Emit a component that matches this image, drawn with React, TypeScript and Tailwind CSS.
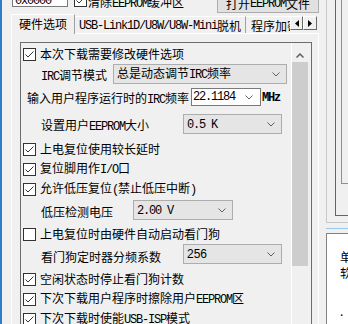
import React from "react";

const cjk = "font-['Noto_Sans_CJK_SC','Noto_Sans',sans-serif]";
const mono = "font-['Liberation_Mono',monospace] tracking-[-1.2px]";

// latin runs in the old dialog font are half-width, so set them in a narrow mono
function T({ s }: { s: string }) {
  const parts = s.split(/([\x20-\x7e]+)/);
  return (
    <>
      {parts.map((p, i) =>
        /^[\x20-\x7e]+$/.test(p) ? (
          <span key={i} className={mono}>
            {p}
          </span>
        ) : (
          p
        )
      )}
    </>
  );
}

function Check({ on }: { on: boolean }) {
  return (
    <span className="flex h-[13px] w-[13px] shrink-0 items-center justify-center border border-[#333333] bg-white">
      {on && (
        <svg width="11" height="11" viewBox="0 0 11 11">
          <path d="M1.5 5.5 L4 8 L9.5 2.5" fill="none" stroke="#333333" strokeWidth="1" />
        </svg>
      )}
    </span>
  );
}

function Chevron() {
  return (
    <svg width="8" height="5" viewBox="0 0 8 5" className="shrink-0">
      <path d="M0.5 0.5 L4 4 L7.5 0.5" fill="none" stroke="#606060" strokeWidth="1" />
    </svg>
  );
}

function Select({ value, className }: { value: string; className: string }) {
  return (
    <div
      className={`flex h-[20px] shrink-0 items-center justify-between border border-[#adadad] bg-[#e5e5e5] pl-[3px] pr-[6px] ${className}`}
    >
      <span className="whitespace-nowrap leading-none">
        <T s={value} />
      </span>
      <Chevron />
    </div>
  );
}

function CheckRow({ on, text, className = "" }: { on: boolean; text: string; className?: string }) {
  return (
    <div className={`flex h-[20px] items-center pl-[2px] ${className}`}>
      <Check on={on} />
      <span className="ml-[4px] whitespace-nowrap leading-none">
        <T s={text} />
      </span>
    </div>
  );
}

export default function App() {
  return (
    <div className={`flex h-[324px] w-[348px] overflow-hidden bg-[#f0f0f0] text-[12px] text-black ${cjk}`}>
      <div className="w-[2px] shrink-0 bg-[#2f7ccb]" />

      <div className="flex w-[318px] shrink-0 flex-col">
        {/* top row, mostly scrolled off */}
        <div className="mt-[-9px] flex h-[22px] shrink-0 items-start">
          <div className="ml-[10px] mt-[-4px] flex h-[20px] w-[56px] items-end border border-[#7a7a7a] bg-white pl-[2px]">
            <span className={`${mono} mb-[-2px] leading-[14px]`}>0x0000</span>
          </div>
          <div className="ml-[6px] mt-[3px]">
            <Check on />
          </div>
          <span className="ml-[1px] mt-[3px] whitespace-nowrap leading-[16px]">
            <T s="清除EEPROM缓冲区" />
          </span>
          <div className="ml-auto mr-[1px] flex h-[22px] w-[102px] items-center justify-center border border-[#adadad] bg-[#e1e1e1] pt-[3px]">
            <T s="打开EEPROM文件" />
          </div>
        </div>

        {/* tabs */}
        <div className="mt-[1px] flex h-[19px] shrink-0 items-end pl-[9px] pr-[3px]">
          <div className="relative z-10 mb-[-1px] flex h-[20px] w-[64px] shrink-0 items-center justify-center border-l border-t border-r border-l-white border-t-white border-r-[#a0a0a0] bg-[#f0f0f0] pb-[1px]">
            硬件选项
          </div>
          <div className="flex h-[17px] w-[171px] shrink-0 items-center justify-center overflow-hidden whitespace-nowrap border-r border-t border-r-[#a0a0a0] border-t-white pt-[2px]">
            <T s="USB-Link1D/U8W/U8W-Mini脱机" />
          </div>
          <div className="flex h-[17px] min-w-0 flex-1 items-center overflow-hidden whitespace-nowrap border-t border-t-white pl-[5px] pt-[2px] pr-[2px]">
            程序加密后传输
          </div>
          <div className="mb-[3px] flex h-[14px] shrink-0">
            <div className="flex w-[13px] items-center justify-center border border-l-white border-t-white border-r-[#696969] border-b-[#696969] bg-[#f0f0f0]">
              <svg width="4" height="7" viewBox="0 0 4 7">
                <path d="M4 0 L0 3.5 L4 7 Z" fill="#000" />
              </svg>
            </div>
            <div className="flex w-[14px] items-center justify-center border border-l-white border-t-white border-r-[#696969] border-b-[#696969] bg-[#f0f0f0]">
              <svg width="4" height="7" viewBox="0 0 4 7">
                <path d="M0 0 L4 3.5 L0 7 Z" fill="#000" />
              </svg>
            </div>
          </div>
        </div>

        {/* tab panel */}
        <div className="ml-[9px] flex w-[308px] flex-1 border-l border-r border-t border-white pl-[8px] pt-[8px]">
          <div className="flex h-[400px] w-[292px] shrink-0 border border-[#6d6d6d]">
            <div className="flex w-[270px] shrink-0 flex-col overflow-hidden pt-[1px]">
              <CheckRow on text="本次下载需要修改硬件选项" />

              <div className="flex h-[20px] items-center pl-[20px]">
                <span className="mt-[3px] w-[72px] shrink-0 whitespace-nowrap leading-none">
                  <T s="IRC调节模式" />
                </span>
                <Select value="总是动态调节IRC频率" className="w-[174px]" />
              </div>

              <div className="mt-[3px] flex h-[20px] items-center pl-[6px]">
                <span className="mt-[3px] w-[164px] shrink-0 whitespace-nowrap leading-none">
                  <T s="输入用户程序运行时的IRC频率" />
                </span>
                <div className="flex h-[18px] w-[70px] shrink-0 items-center justify-between border border-[#7a7a7a] bg-white pl-[1px] pr-[7px]">
                  <span className={`${mono} leading-none`}>22.1184</span>
                  <Chevron />
                </div>
                <span className={`${mono} ml-[1px] mt-[1px] font-bold leading-none`}>MHz</span>
              </div>

              <div className="mt-[7px] flex h-[20px] items-center pl-[20px]">
                <span className="mt-[4px] w-[142px] shrink-0 whitespace-nowrap leading-none">
                  <T s="设置用户EEPROM大小" />
                </span>
                <Select value="0.5 K" className="w-[99px]" />
              </div>

              <CheckRow on text="上电复位使用较长延时" className="mt-[5px] h-[19px]" />
              <CheckRow on text="复位脚用作I/O口" />
              <CheckRow on text="允许低压复位(禁止低压中断)" />

              <div className="mt-[1px] flex h-[20px] items-center pl-[20px]">
                <span className="mt-[4px] w-[92px] shrink-0 whitespace-nowrap leading-none">低压检测电压</span>
                <Select value="2.00 V" className="w-[100px]" />
              </div>

              <CheckRow on={false} text="上电复位时由硬件自动启动看门狗" className="mt-[4px]" />

              <div className="flex h-[20px] items-center pl-[20px]">
                <span className="mt-[5px] w-[142px] shrink-0 whitespace-nowrap leading-none">看门狗定时器分频系数</span>
                <div className="flex h-[20px] w-[99px] shrink-0 items-center justify-between border border-[#adadad] bg-[#e5e5e5] pl-[3px] pr-[6px]">
                  <span className="font-['Liberation_Sans',sans-serif] leading-none">256</span>
                  <Chevron />
                </div>
              </div>

              <CheckRow on text="空闲状态时停止看门狗计数" className="mt-[5px]" />
              <CheckRow on text="下次下载用户程序时擦除用户EEPROM区" />
              <CheckRow on text="下次下载时使能USB-ISP模式" />
            </div>

            {/* scrollbar */}
            <div className="flex w-[20px] shrink-0 flex-col border-l border-white">
              <div className="flex h-[19px] shrink-0 justify-center pt-[10px] pr-[3px]">
                <svg width="8" height="5" viewBox="0 0 8 5">
                  <path d="M0.5 4.5 L4 1 L7.5 4.5" fill="none" stroke="#606060" strokeWidth="1.5" />
                </svg>
              </div>
              <div className="h-[204px] w-[16px] shrink-0 bg-[#cdcdcd]" />
            </div>
          </div>
        </div>
      </div>

      {/* right side, clipped neighbour panel */}
      <div className="flex w-[28px] shrink-0 flex-col pl-[6px]">
        <div className="h-[223px] shrink-0 border-b border-l border-[#c8c8c8] pl-[8px]">
          <div className="h-[216px] border-b border-l border-[#646464] pl-[5px]">
            <div className="h-[184px] border-b border-l border-[#909090]" />
          </div>
        </div>
        <div className="mt-[5px] h-[1px] shrink-0 bg-[#99c9ef]" />
        <div className="mt-[4px] flex-1 border-l border-t border-[#828282] bg-white pl-[13px] pt-[15px] leading-[16px]">
          <div className="whitespace-nowrap">单片</div>
          <div className="whitespace-nowrap">软件</div>
          <div className="mt-[22px] whitespace-nowrap">.</div>
        </div>
      </div>
    </div>
  );
}
